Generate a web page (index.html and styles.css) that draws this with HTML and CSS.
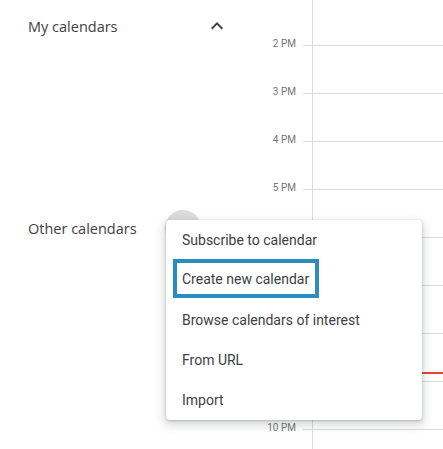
FILE: index.html
```html
<!DOCTYPE html>
<html lang="en">
<head>
<meta charset="utf-8">
<title>Calendar</title>
<link rel="stylesheet" href="styles.css">
</head>
<body>
<div class="app">
  <aside class="sidebar">
    <div class="section-header">
      <span class="section-title">My calendars</span>
      <span class="icon-btn">
        <svg width="24" height="24" viewBox="0 0 24 24"><path d="M7.41 15.41L12 10.83l4.59 4.58L18 14l-6-6-6 6z" fill="#3c4043"/></svg>
      </span>
    </div>
    <div class="calendar-list"></div>
    <div class="section-header">
      <span class="section-title">Other calendars</span>
      <span class="add-btn">
        <svg width="24" height="24" viewBox="0 0 24 24"><path d="M19 13h-6v6h-2v-6H5v-2h6V5h2v6h6v2z" fill="#5f6368"/></svg>
      </span>
      <span class="icon-btn">
        <svg width="24" height="24" viewBox="0 0 24 24"><path d="M7.41 8.59L12 13.17l4.59-4.58L18 10l-6 6-6-6z" fill="#3c4043"/></svg>
      </span>
    </div>
  </aside>
  <main class="timeline">
    <div class="gutter">
      <div class="label">2 PM</div>
      <div class="label">3 PM</div>
      <div class="label">4 PM</div>
      <div class="label">5 PM</div>
      <div class="label">6 PM</div>
      <div class="label">7 PM</div>
      <div class="label">8 PM</div>
      <div class="label">9 PM</div>
      <div class="label">10 PM</div>
    </div>
    <div class="ticks">
      <div class="row"></div><div class="row"></div><div class="row"></div>
      <div class="row"></div><div class="row"></div><div class="row"></div>
      <div class="row"></div><div class="row"></div><div class="row"></div>
    </div>
    <div class="day">
      <div class="row"></div><div class="row"></div><div class="row"></div>
      <div class="row"></div><div class="row"></div><div class="row"></div>
      <div class="row"></div><div class="row"></div><div class="row"></div>
      <div class="now-line"></div>
    </div>
  </main>
  <ul class="menu">
    <li class="menu-item"><span class="menu-text">Subscribe to calendar</span></li>
    <li class="menu-item"><span class="menu-text focused">Create new calendar</span></li>
    <li class="menu-item"><span class="menu-text">Browse calendars of interest</span></li>
    <li class="menu-item"><span class="menu-text">From URL</span></li>
    <li class="menu-item"><span class="menu-text">Import</span></li>
  </ul>
</div>
</body>
</html>
```
FILE: styles.css
```css
* { box-sizing: border-box; }
html, body { margin: 0; padding: 0; background: #fff; }
body { font-family: Roboto, "Liberation Sans", sans-serif; color: #3c4043; }

.app {
  position: relative;
  display: flex;
  width: 443px;
  height: 449px;
  overflow: hidden;
}

.sidebar {
  width: 256px;
  flex: none;
  padding: 6px 27px 0 28px;
}

.section-header {
  display: flex;
  align-items: center;
  height: 40px;
}
.section-title {
  flex: 1;
  font-family: "Open Sans", Roboto, sans-serif;
  font-size: 14.5px;
  color: #3c4043;
}
.icon-btn {
  width: 24px;
  height: 24px;
  display: flex;
}
.add-btn {
  width: 36px;
  height: 36px;
  border-radius: 50%;
  background: #dcdcdc;
  display: flex;
  align-items: center;
  justify-content: center;
  margin-right: 4px;
}
.calendar-list { height: 162px; }

.timeline {
  flex: 1;
  display: flex;
}
.gutter {
  width: 47px;
  flex: none;
  padding: 38px 7px 0 0;
  text-align: right;
}
.label {
  height: 48px;
  font-size: 10px;
  line-height: 12px;
  color: #70757a;
}
.ticks {
  width: 9px;
  flex: none;
  padding-top: 45px;
}
.day {
  position: relative;
  flex: 1;
  padding-top: 45px;
  border-left: 1px solid #dadce0;
}
.row {
  height: 48px;
  border-top: 1px solid #dadce0;
}
.now-line {
  position: absolute;
  left: 0;
  right: 0;
  top: 372px;
  height: 2px;
  background: #ea4335;
}

.menu {
  position: absolute;
  left: 166px;
  top: 220px;
  width: 256px;
  margin: 0;
  padding: 0;
  list-style: none;
  background: #fff;
  border-radius: 4px;
  box-shadow: 0 4px 8px 3px rgba(60, 64, 67, 0.15), 0 1px 3px rgba(60, 64, 67, 0.3);
}
.menu-item {
  display: flex;
  align-items: center;
  height: 40px;
  padding-left: 16px;
  font-size: 14px;
  color: #3c4043;
}
.menu-text.focused {
  display: inline-flex;
  align-items: center;
  height: 39px;
  margin-left: -9px;
  margin-bottom: 3px;
  padding: 0 6px 0 5px;
  border: 4px solid #2b8cbe;
}
```
